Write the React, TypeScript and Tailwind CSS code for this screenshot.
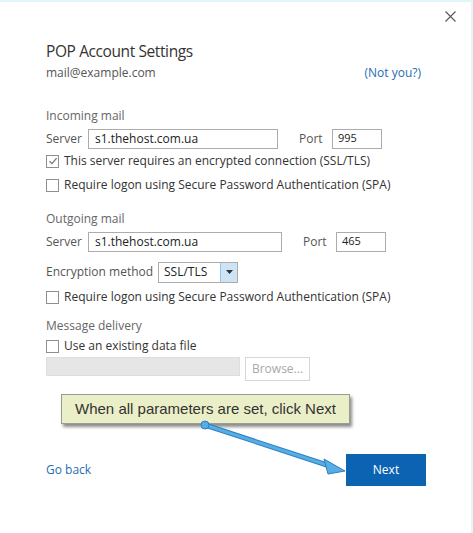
import React from 'react'

function Checkbox({ checked }: { checked?: boolean }) {
  return (
    <span className="w-[13px] h-[13px] border border-[#8f8f8f] bg-white flex items-center justify-center shrink-0">
      {checked && (
        <svg width="10" height="10" viewBox="0 0 10 10">
          <path d="M1.5 5.2 L4 7.6 L8.6 2.2" fill="none" stroke="#777" strokeWidth="1.3" />
        </svg>
      )}
    </span>
  )
}

function ServerRow({ inputWidth, port }: { inputWidth: string; port: string }) {
  return (
    <div className="flex items-center h-[19px]">
      <span className="w-[42px] text-[#555]">Server</span>
      <div className={`${inputWidth} h-[20px] border border-[#acacac] px-[6px] flex items-center text-[#222]`}>
        s1.thehost.com.ua
      </div>
      <span className="ml-[21px] w-[33px] text-[#555]">Port</span>
      <div className="w-[50px] h-[20px] border border-[#acacac] px-[5px] flex items-center text-[#222] text-[11px]">
        {port}
      </div>
    </div>
  )
}

export default function App() {
  return (
    <main
      className="relative w-[473px] h-[533px] bg-white border-t-2 border-r-2 border-[#e1f6f8] text-[12px] overflow-hidden"
      style={{ fontFamily: '"Open Sans", "Noto Sans", sans-serif' }}
    >
      {/* Close */}
      <div className="flex justify-end pt-[9px] pr-[15px] h-[28px]">
        <svg width="11" height="11" viewBox="0 0 11 11">
          <path d="M0.5 0.5 L10.5 10.5 M10.5 0.5 L0.5 10.5" stroke="#555" strokeWidth="1.1" />
        </svg>
      </div>

      <div className="pl-[46px] pr-[50px]">
        <h1 className="mt-[10px] text-[15.5px] tracking-[-0.4px] leading-[22px] text-[#333]">POP Account Settings</h1>
        <div className="mt-[3px] flex justify-between leading-[16px]">
          <span className="text-[#555]">mail@example.com</span>
          <span className="text-[#1f6eb1]">(Not you?)</span>
        </div>

        {/* Incoming */}
        <p className="mt-[27px] leading-[16px] text-[#666]">Incoming mail</p>
        <div className="mt-[5px]">
          <ServerRow inputWidth="w-[190px]" port="995" />
        </div>
        <div className="mt-[5px] flex items-center gap-[5px] h-[16px] text-[#333]">
          <Checkbox checked />
          <span>This server requires an encrypted connection (SSL/TLS)</span>
        </div>
        <div className="mt-[8px] flex items-center gap-[5px] h-[16px] text-[#333]">
          <Checkbox />
          <span>Require logon using Secure Password Authentication (SPA)</span>
        </div>

        {/* Outgoing */}
        <p className="mt-[18px] leading-[16px] text-[#666]">Outgoing mail</p>
        <div className="mt-[5px]">
          <ServerRow inputWidth="w-[194px]" port="465" />
        </div>
        <div className="mt-[11px] flex items-center h-[20px]">
          <span className="w-[112px] text-[#555]">Encryption method</span>
          <div className="w-[80px] h-[21px] border border-[#acacac] flex">
            <span className="flex-1 px-[5px] flex items-center text-[#222]">SSL/TLS</span>
            <span className="w-[17px] bg-[#cde4f7] border-l border-[#9fc3e3] flex items-center justify-center">
              <svg width="7" height="4" viewBox="0 0 7 4">
                <path d="M0 0 L7 0 L3.5 4 Z" fill="#333" />
              </svg>
            </span>
          </div>
        </div>
        <div className="mt-[7px] flex items-center gap-[5px] h-[16px] text-[#333]">
          <Checkbox />
          <span>Require logon using Secure Password Authentication (SPA)</span>
        </div>

        {/* Delivery */}
        <p className="mt-[13px] leading-[16px] text-[#666]">Message delivery</p>
        <div className="mt-[4px] flex items-center gap-[5px] h-[16px] text-[#333]">
          <Checkbox />
          <span>Use an existing data file</span>
        </div>
        <div className="mt-[3px] flex items-start gap-[5px]">
          <div className="w-[194px] h-[19px] bg-[#e6e6e6] border border-[#dedede]" />
          <div className="w-[65px] h-[24px] border border-[#d6d6d6] flex items-center justify-center text-[#a8a8a8]">
            Browse...
          </div>
        </div>

        {/* Footer */}
        <div className="mt-[73px] flex items-center justify-between">
          <span className="text-[#1f6eb1]">Go back</span>
          <button className="w-[80px] h-[32px] bg-[#0c63b1] text-white mr-[-5px]">Next</button>
        </div>
      </div>

      {/* Annotation */}
      <div
        className="absolute left-[61px] top-[392px] w-[289px] h-[30px] bg-[#ebefc8] border border-[#9c9c8c] shadow-[2px_3px_3px_rgba(0,0,0,0.45)] flex items-center justify-center text-[15px] text-[#333]"
        style={{ fontFamily: '"Liberation Sans", Arial, sans-serif' }}
      >
        When all parameters are set, click Next
      </div>
      <svg className="absolute left-0 top-0" width="473" height="533" viewBox="0 0 473 533">
        <line x1="205" y1="423" x2="330" y2="464" stroke="#2f7fbf" strokeWidth="5" strokeLinecap="round" />
        <line x1="205" y1="423" x2="330" y2="464" stroke="#55aee6" strokeWidth="3" strokeLinecap="round" />
        <path d="M345 469 L324 457 L328 472 Z" fill="#55aee6" stroke="#2f7fbf" strokeWidth="1" strokeLinejoin="round" />
        <circle cx="205" cy="423" r="4" fill="#55aee6" stroke="#2f7fbf" strokeWidth="1" />
      </svg>
    </main>
  )
}
